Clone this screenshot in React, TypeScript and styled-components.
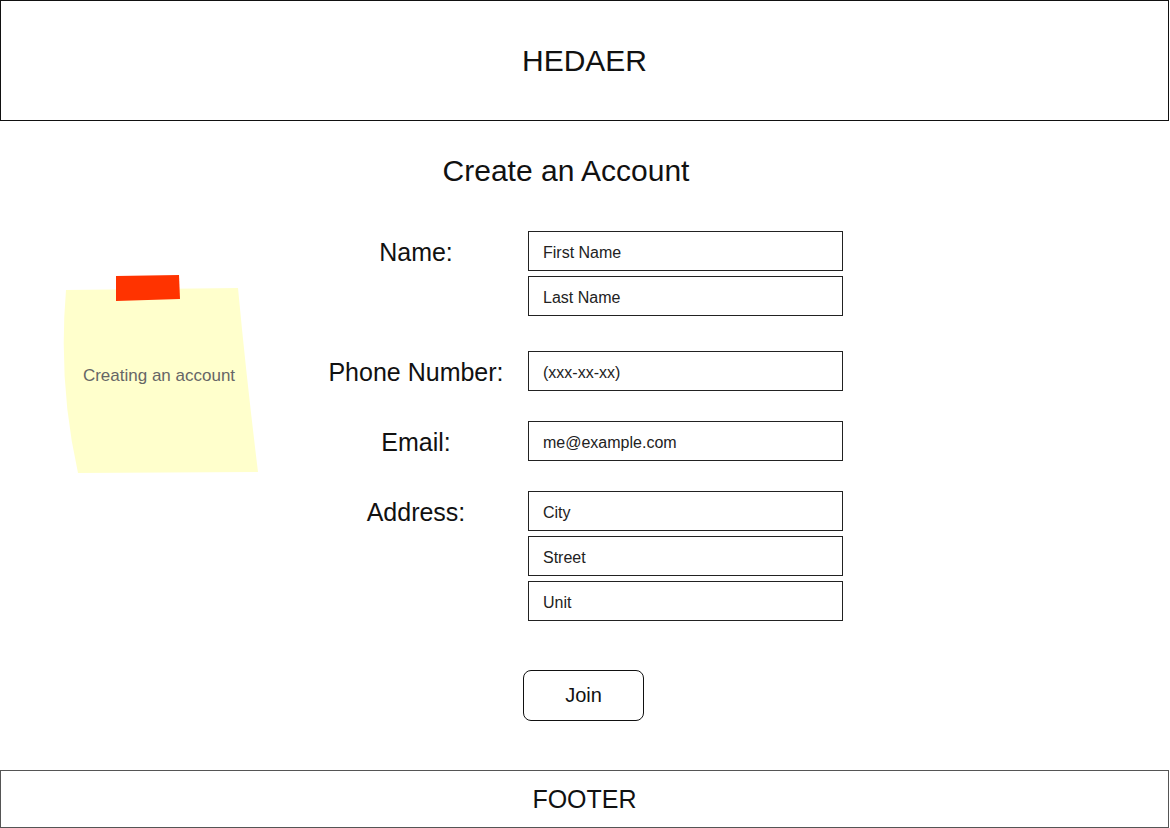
import React from "react";
import styled, { createGlobalStyle } from "styled-components";

const GlobalStyle = createGlobalStyle`
  html, body {
    margin: 0;
    padding: 0;
    background: #ffffff;
  }
  body {
    font-family: "Liberation Sans", Arial, sans-serif;
    color: #111;
  }
`;

const Page = styled.div`
  width: 1170px;
  height: 828px;
  display: flex;
  flex-direction: column;
  overflow: hidden;
`;

const Bar = styled.div<{ $height: number; $size: number; $border: string }>`
  box-sizing: border-box;
  width: 1169px;
  height: ${(p) => p.$height}px;
  border: 1px solid ${(p) => p.$border};
  display: flex;
  align-items: center;
  justify-content: center;
  font-size: ${(p) => p.$size}px;
  color: #111;
`;

const Title = styled.h1`
  margin: 33px 0 0;
  padding-right: 38px;
  font-size: 30px;
  font-weight: 400;
  line-height: 34px;
  text-align: center;
  color: #111;
`;

const Body = styled.div`
  margin-top: 43px;
  display: flex;
  align-items: flex-start;
`;

const Note = styled.div`
  position: relative;
  margin: 43px 0 0 62px;
  width: 200px;
  height: 200px;
  display: flex;
  align-items: center;
  justify-content: center;
  padding: 0 6px 0 0;
  box-sizing: border-box;
`;

const NoteShape = styled.svg`
  position: absolute;
  inset: 0;
`;

const NoteText = styled.span`
  position: relative;
  margin-top: 4px;
  font-size: 17px;
  color: #666;
`;

const Form = styled.div`
  margin-left: 51px;
  display: flex;
  flex-direction: column;
`;

const FieldRow = styled.div<{ $top: number }>`
  margin-top: ${(p) => p.$top}px;
  display: grid;
  grid-template-columns: 206px 315px;
  column-gap: 9px;
  align-items: start;
`;

const Label = styled.div`
  height: 40px;
  line-height: 42px;
  text-align: center;
  font-size: 25px;
  color: #111;
`;

const Stack = styled.div`
  display: flex;
  flex-direction: column;
  gap: 5px;
`;

const Input = styled.input`
  box-sizing: border-box;
  width: 315px;
  height: 40px;
  border: 1px solid #222;
  border-radius: 0;
  padding: 3px 0 0 14px;
  margin: 0;
  font-family: "Liberation Sans", Arial, sans-serif;
  font-size: 16px;
  color: #222;
  outline: none;
  &::placeholder {
    color: #222;
    opacity: 1;
  }
`;

const JoinRow = styled.div`
  margin-top: 49px;
  display: flex;
  justify-content: center;
  padding-right: 3px;
`;

const JoinButton = styled.button`
  box-sizing: border-box;
  width: 121px;
  height: 51px;
  border: 1px solid #111;
  border-radius: 8px;
  background: #fff;
  font-family: "Liberation Sans", Arial, sans-serif;
  font-size: 20px;
  color: #111;
  cursor: pointer;
`;

const FooterWrap = styled.div`
  margin-top: 49px;
`;

const fields: { label: string; top: number; inputs: string[] }[] = [
  { label: "Name:", top: 0, inputs: ["First Name", "Last Name"] },
  { label: "Phone Number:", top: 35, inputs: ["(xxx-xx-xx)"] },
  { label: "Email:", top: 30, inputs: ["me@example.com"] },
  { label: "Address:", top: 30, inputs: ["City", "Street", "Unit"] },
];

export default function App() {
  return (
    <>
      <GlobalStyle />
      <Page>
        <Bar $height={121} $size={30} $border="#111">
          HEDAER
        </Bar>
        <Title>Create an Account</Title>
        <Body>
          <Note>
            <NoteShape width="200" height="200" viewBox="0 0 200 200">
              <path
                d="M4 16 L176 14 Q184 100 196 198 L16 199 Q-4 110 4 16 Z"
                fill="#ffffcc"
              />
              <path d="M54 2 L117 1 L118 25 L54 27 Z" fill="#ff3300" />
            </NoteShape>
            <NoteText>Creating an account</NoteText>
          </Note>
          <Form>
            {fields.map((f) => (
              <FieldRow key={f.label} $top={f.top}>
                <Label>{f.label}</Label>
                <Stack>
                  {f.inputs.map((ph) => (
                    <Input key={ph} placeholder={ph} />
                  ))}
                </Stack>
              </FieldRow>
            ))}
          </Form>
        </Body>
        <JoinRow>
          <JoinButton>Join</JoinButton>
        </JoinRow>
        <FooterWrap>
          <Bar $height={58} $size={25} $border="#555">
            FOOTER
          </Bar>
        </FooterWrap>
      </Page>
    </>
  );
}
